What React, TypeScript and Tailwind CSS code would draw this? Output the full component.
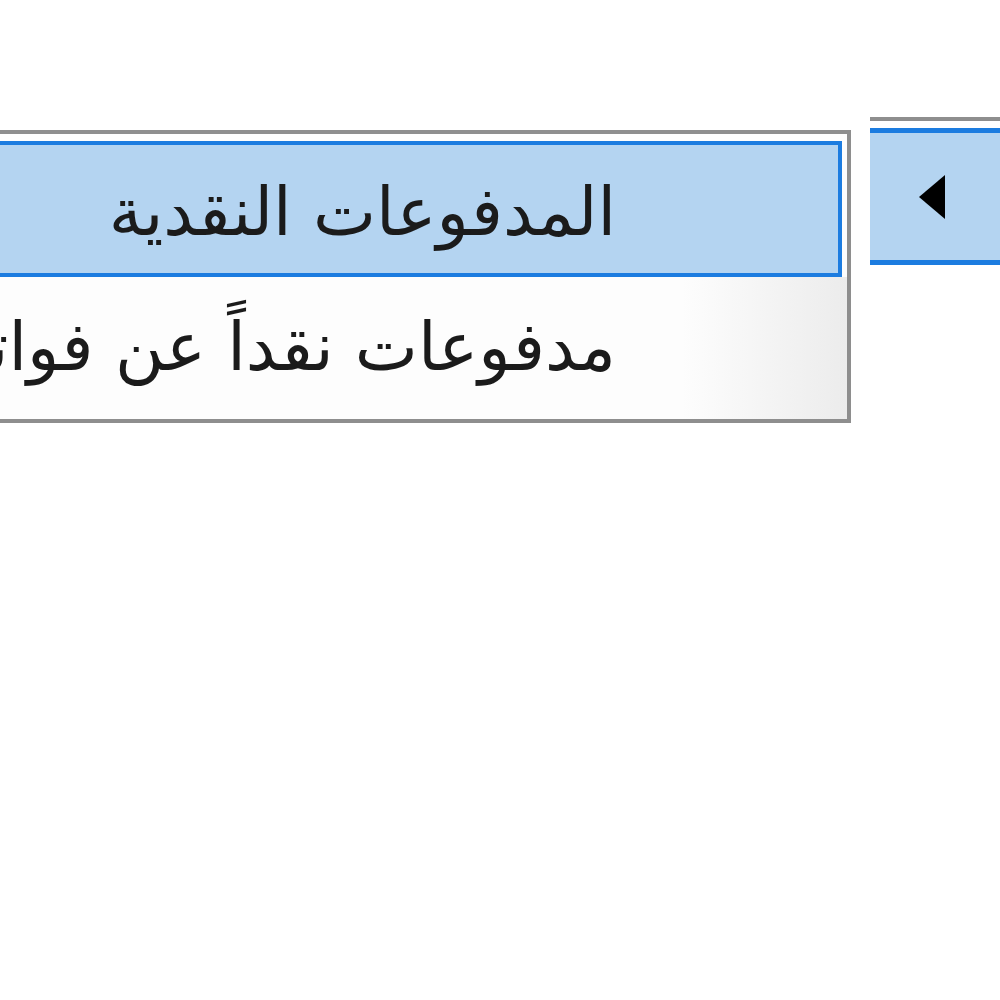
export default function App() {
  return (
    <div className="w-[1000px] h-[1000px] bg-white overflow-hidden" style={{ fontFamily: '"DejaVu Sans", Tahoma, sans-serif' }}>
      <div className="flex items-start pt-[117px]">
        {/* submenu, runs off the left edge */}
        <div className="shrink-0 w-[1251px] -ml-[400px] mt-[13px] border-4 border-[#8e8e8e] bg-[#fdfdfd] px-[5px] pt-[7px]" dir="rtl">
          <div className="h-[136px] border-4 border-[#1c7ce0] bg-[#b4d4f1] flex items-center pr-[222px] pt-[6px]">
            <span className="text-[67px] leading-none text-[#1b1b1b] whitespace-nowrap">المدفوعات النقدية</span>
          </div>
          <div className="h-[142px] -mx-[5px] px-[5px] bg-[linear-gradient(to_left,#ececec,#fdfdfd_165px)] flex items-center pr-[231px] pb-[2px]">
            <span className="text-[67px] leading-none text-[#1b1b1b] whitespace-nowrap">مدفوعات نقداً عن فواتير المشتريات</span>
          </div>
        </div>
        {/* parent menu */}
        <div className="shrink-0 w-[200px] ml-[19px] border-t-4 border-[#8e8e8e] pt-[7px]">
          <div className="h-[137px] border-y-[5px] border-[#1c7ce0] bg-[#b4d4f1] flex items-center pl-[48px]">
            <svg width="28" height="46" viewBox="0 0 28 46">
              <polygon points="27,1 27,45 1,23" fill="#000" />
            </svg>
          </div>
        </div>
      </div>
    </div>
  );
}
